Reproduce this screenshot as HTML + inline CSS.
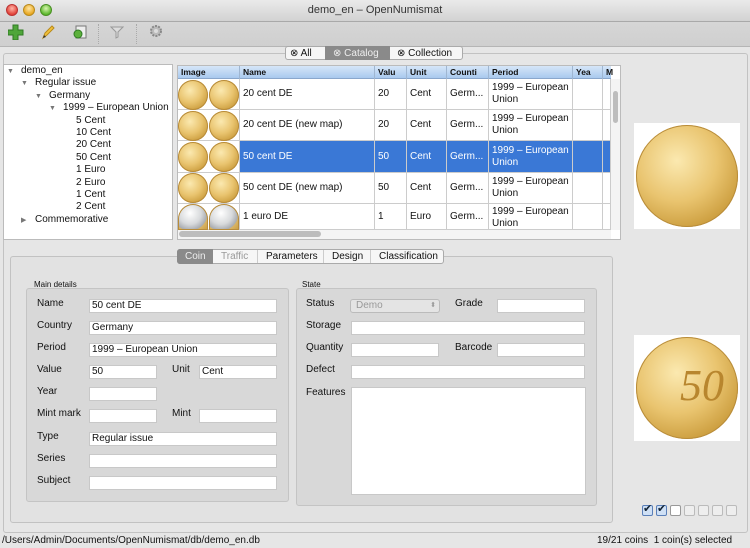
<!DOCTYPE html>
<html><head><meta charset="utf-8"><style>
*{box-sizing:border-box;margin:0;padding:0}
body{width:750px;height:548px;overflow:hidden;background:#e6e6e6;font-family:"Liberation Sans",sans-serif;font-size:10px;color:#111;position:relative}
.a{position:absolute}
.coin{position:absolute;border-radius:50%;background:radial-gradient(circle at 40% 35%,#fbe9b0 0%,#e9c46f 45%,#c99a3a 80%,#a9782a 100%);box-shadow:inset 0 0 0 1px #b88c3a}
.silver{background:radial-gradient(circle at 40% 35%,#ffffff 0%,#d8dadc 45%,#a8abb0 70%,#d8b466 72%,#c99a3a 100%)}
.inp{position:absolute;background:#fff;border:1px solid #c8c8c8;height:14px;font-size:10px;padding-left:2px;line-height:12px}
.lbl{position:absolute;font-size:10px}
.th{position:absolute;top:66px;height:13px;font-weight:bold;font-size:8.5px;line-height:13px;padding-left:3px;border-right:1px solid #9fb6d1}
.cell{position:absolute;font-size:10px;padding-left:3px;display:flex;align-items:center;border-right:1px solid #ccc;border-bottom:1px solid #ccc;line-height:12px}
.sel{background:#3a78d6;color:#fff}
.cb{position:absolute;top:505px;width:11px;height:11px;border:1px solid #bbb;border-radius:2px;background:#eee}
.tr{height:12.4px;line-height:12.4px;white-space:nowrap}
.ar{color:#777;font-size:7px;display:inline-block;width:14px}
</style></head><body>
<div class="a" style="left:0;top:0;width:750px;height:22px;background:linear-gradient(#eaeaea,#d2d2d2);border-bottom:1px solid #a9a9a9"></div>
<div class="a" style="left:6px;top:4px;width:12px;height:12px;border-radius:50%;background:radial-gradient(circle at 50% 35%,#ffb5a8,#e2443a 70%);border:1px solid #b33"></div>
<div class="a" style="left:23px;top:4px;width:12px;height:12px;border-radius:50%;background:radial-gradient(circle at 50% 35%,#ffe7a5,#e8a722 70%);border:1px solid #b98a1d"></div>
<div class="a" style="left:40px;top:4px;width:12px;height:12px;border-radius:50%;background:radial-gradient(circle at 50% 35%,#d9f5b0,#5cb82e 70%);border:1px solid #4a8f24"></div>
<div class="a" style="left:0;top:4px;width:750px;text-align:center;font-size:11px;color:#333">demo_en – OpenNumismat</div>
<div class="a" style="left:0;top:22px;width:750px;height:24px;background:linear-gradient(#d6d6d6,#cfcfcf)"></div>
<div class="a" style="left:0;top:46px;width:750px;height:1px;background:#b5b5b5"></div>
<svg class="a" style="left:8px;top:24px" width="16" height="16"><path d="M5 1h5v5h5v5h-5v5h-5v-5h-5v-5h5z" fill="#4fa63a" stroke="#2f7a22"/></svg>
<svg class="a" style="left:40px;top:24px" width="16" height="16"><path d="M3 14l2-5 7-7 2 2-7 7z" fill="#f2c13c" stroke="#b88a1a"/><path d="M3 14l1-3 2 2z" fill="#333"/></svg>
<svg class="a" style="left:72px;top:24px" width="16" height="16"><rect x="4" y="2" width="10" height="12" fill="#eee" stroke="#777"/><circle cx="6" cy="10" r="4" fill="#5cb03c" stroke="#2e7a22"/></svg>
<div class="a" style="left:98px;top:24px;width:1px;height:20px;border-left:1px dotted #aaa"></div>
<svg class="a" style="left:110px;top:25px" width="14" height="14"><path d="M1 2h12l-5 5v5l-2 1v-6z" fill="#ddd" stroke="#999"/></svg>
<div class="a" style="left:136px;top:24px;width:1px;height:20px;border-left:1px dotted #aaa"></div>
<svg class="a" style="left:149px;top:24px" width="14" height="14"><circle cx="7" cy="7" r="5" fill="#bbb" stroke="#888" stroke-dasharray="2 1.2" stroke-width="2"/><circle cx="7" cy="7" r="2" fill="#ddd"/></svg>
<div class="a" style="left:3px;top:53px;width:745px;height:480px;border:1px solid #c2c2c2;border-radius:3px"></div>
<div class="a" style="left:285px;top:46px;width:178px;height:14px;background:#f6f6f6;border:1px solid #aaa;border-radius:3px"></div>
<div class="a" style="left:325px;top:46px;width:65px;height:14px;background:#8a8a8a"></div>
<div class="a" style="left:290px;top:47px;font-size:10px;line-height:13px">&#x2297; All</div>
<div class="a" style="left:333px;top:47px;font-size:10px;line-height:13px;color:#eee">&#x2297; Catalog</div>
<div class="a" style="left:397px;top:47px;font-size:10px;line-height:13px">&#x2297; Collection</div>
<!-- tree -->
<div class="a" style="left:3px;top:64px;width:170px;height:176px;background:#fff;border:1px solid #bbb"></div>
<div class="a" style="left:7px;top:65px;font-size:10px">
<div class="tr"><span class="ar">▼</span>demo_en</div>
<div class="tr" style="padding-left:14px"><span class="ar">▼</span>Regular issue</div>
<div class="tr" style="padding-left:28px"><span class="ar">▼</span>Germany</div>
<div class="tr" style="padding-left:42px"><span class="ar">▼</span>1999 – European Union</div>
<div class="tr" style="padding-left:69px">5 Cent</div>
<div class="tr" style="padding-left:69px">10 Cent</div>
<div class="tr" style="padding-left:69px">20 Cent</div>
<div class="tr" style="padding-left:69px">50 Cent</div>
<div class="tr" style="padding-left:69px">1 Euro</div>
<div class="tr" style="padding-left:69px">2 Euro</div>
<div class="tr" style="padding-left:69px">1 Cent</div>
<div class="tr" style="padding-left:69px">2 Cent</div>
<div class="tr" style="padding-left:14px"><span class="ar">▶</span>Commemorative</div>
</div>
<!-- table -->
<div class="a" style="left:177px;top:65px;width:444px;height:175px;background:#fff;border:1px solid #bbb"></div>
<div class="a" style="left:178px;top:66px;width:433px;height:13px;background:linear-gradient(#d6e6f8,#a9c9ee);border-bottom:1px solid #8aa7cc"></div>
<div class="th" style="left:178px;width:62px">Image</div>
<div class="th" style="left:240px;width:135px">Name</div>
<div class="th" style="left:375px;width:32px">Valu</div>
<div class="th" style="left:407px;width:40px">Unit</div>
<div class="th" style="left:447px;width:42px">Counti</div>
<div class="th" style="left:489px;width:84px">Period</div>
<div class="th" style="left:573px;width:30px">Yea</div>
<div class="th" style="left:603px;width:8px;border:none">M</div>

<div class="cell" style="left:178px;top:79px;width:62px;height:31px"></div>
<div class="cell" style="left:240px;top:79px;width:135px;height:31px">20 cent DE</div>
<div class="cell" style="left:375px;top:79px;width:32px;height:31px">20</div>
<div class="cell" style="left:407px;top:79px;width:40px;height:31px">Cent</div>
<div class="cell" style="left:447px;top:79px;width:42px;height:31px">Germ...</div>
<div class="cell" style="left:489px;top:79px;width:84px;height:31px">1999 – European Union</div>
<div class="cell" style="left:573px;top:79px;width:30px;height:31px"></div>
<div class="cell" style="left:603px;top:79px;width:8px;height:31px"></div>

<div class="cell" style="left:178px;top:110px;width:62px;height:31px"></div>
<div class="cell" style="left:240px;top:110px;width:135px;height:31px">20 cent DE (new map)</div>
<div class="cell" style="left:375px;top:110px;width:32px;height:31px">20</div>
<div class="cell" style="left:407px;top:110px;width:40px;height:31px">Cent</div>
<div class="cell" style="left:447px;top:110px;width:42px;height:31px">Germ...</div>
<div class="cell" style="left:489px;top:110px;width:84px;height:31px">1999 – European Union</div>
<div class="cell" style="left:573px;top:110px;width:30px;height:31px"></div>
<div class="cell" style="left:603px;top:110px;width:8px;height:31px"></div>

<div class="cell" style="left:178px;top:141px;width:62px;height:32px"></div>
<div class="cell sel" style="left:240px;top:141px;width:135px;height:32px">50 cent DE</div>
<div class="cell sel" style="left:375px;top:141px;width:32px;height:32px">50</div>
<div class="cell sel" style="left:407px;top:141px;width:40px;height:32px">Cent</div>
<div class="cell sel" style="left:447px;top:141px;width:42px;height:32px">Germ...</div>
<div class="cell sel" style="left:489px;top:141px;width:84px;height:32px">1999 – European Union</div>
<div class="cell sel" style="left:573px;top:141px;width:30px;height:32px"></div>
<div class="cell sel" style="left:603px;top:141px;width:8px;height:32px"></div>

<div class="cell" style="left:178px;top:173px;width:62px;height:31px"></div>
<div class="cell" style="left:240px;top:173px;width:135px;height:31px">50 cent DE (new map)</div>
<div class="cell" style="left:375px;top:173px;width:32px;height:31px">50</div>
<div class="cell" style="left:407px;top:173px;width:40px;height:31px">Cent</div>
<div class="cell" style="left:447px;top:173px;width:42px;height:31px">Germ...</div>
<div class="cell" style="left:489px;top:173px;width:84px;height:31px">1999 – European Union</div>
<div class="cell" style="left:573px;top:173px;width:30px;height:31px"></div>
<div class="cell" style="left:603px;top:173px;width:8px;height:31px"></div>

<div class="cell" style="left:178px;top:204px;width:62px;height:26px"></div>
<div class="cell" style="left:240px;top:204px;width:135px;height:26px;align-items:flex-start;padding-top:7px">1 euro DE</div>
<div class="cell" style="left:375px;top:204px;width:32px;height:26px;align-items:flex-start;padding-top:7px">1</div>
<div class="cell" style="left:407px;top:204px;width:40px;height:26px;align-items:flex-start;padding-top:7px">Euro</div>
<div class="cell" style="left:447px;top:204px;width:42px;height:26px;align-items:flex-start;padding-top:7px">Germ...</div>
<div class="cell" style="left:489px;top:204px;width:84px;height:26px;align-items:flex-start;padding-top:2px">1999 – European Union</div>
<div class="cell" style="left:573px;top:204px;width:30px;height:26px"></div>
<div class="cell" style="left:603px;top:204px;width:8px;height:26px"></div>

<div class="coin" style="left:178px;top:80px;width:30px;height:30px"></div>
<div class="coin" style="left:209px;top:80px;width:30px;height:30px"></div>
<div class="coin" style="left:178px;top:111px;width:30px;height:30px"></div>
<div class="coin" style="left:209px;top:111px;width:30px;height:30px"></div>
<div class="coin" style="left:178px;top:142px;width:30px;height:30px"></div>
<div class="coin" style="left:209px;top:142px;width:30px;height:30px"></div>
<div class="coin" style="left:178px;top:173px;width:30px;height:30px"></div>
<div class="coin" style="left:209px;top:173px;width:30px;height:30px"></div>
<div class="coin silver" style="left:178px;top:204px;width:30px;height:26px;border-radius:15px 15px 0 0"></div>
<div class="coin silver" style="left:209px;top:204px;width:30px;height:26px;border-radius:15px 15px 0 0"></div>
<div class="a" style="left:178px;top:230px;width:433px;height:9px;background:#f4f4f4"></div>
<div class="a" style="left:179px;top:231px;width:142px;height:6px;background:#bdbdbd;border-radius:3px"></div>
<div class="a" style="left:611px;top:79px;width:9px;height:151px;background:#f4f4f4"></div>
<div class="a" style="left:613px;top:91px;width:5px;height:32px;background:#bdbdbd;border-radius:3px"></div>
<div class="a" style="left:634px;top:123px;width:106px;height:106px;background:#fff"></div>
<div class="coin" style="left:636px;top:125px;width:102px;height:102px"></div>
<div class="a" style="left:634px;top:335px;width:106px;height:106px;background:#fff"></div>
<div class="coin" style="left:636px;top:337px;width:102px;height:102px"></div>
<div class="a" style="left:680px;top:360px;font-family:'Liberation Serif',serif;font-style:italic;font-size:44px;color:#b8862e">50</div>
<div class="a" style="left:10px;top:256px;width:603px;height:267px;border:1px solid #c2c2c2;border-radius:3px;background:#e2e2e2"></div>
<div class="a" style="left:177px;top:249px;width:267px;height:15px;background:#f6f6f6;border:1px solid #aaa;border-radius:3px"></div>
<div class="a" style="left:177px;top:249px;width:36px;height:15px;background:#8a8a8a;border-radius:3px 0 0 3px"></div>
<div class="a" style="left:185px;top:251px;font-size:10px;line-height:12px;color:#eee">Coin</div>
<div class="a" style="left:221px;top:251px;font-size:10px;line-height:12px;color:#999">Traffic</div>
<div class="a" style="left:257px;top:250px;width:1px;height:13px;background:#ccc"></div>
<div class="a" style="left:266px;top:251px;font-size:10px;line-height:12px">Parameters</div>
<div class="a" style="left:323px;top:250px;width:1px;height:13px;background:#ccc"></div>
<div class="a" style="left:332px;top:251px;font-size:10px;line-height:12px">Design</div>
<div class="a" style="left:370px;top:250px;width:1px;height:13px;background:#ccc"></div>
<div class="a" style="left:379px;top:251px;font-size:10px;line-height:12px">Classification</div>

<div class="a" style="left:34px;top:280px;font-size:8px">Main details</div>
<div class="a" style="left:26px;top:288px;width:263px;height:214px;border:1px solid #c4c4c4;border-radius:3px;background:#d8d8d8"></div>
<div class="a" style="left:302px;top:280px;font-size:8px">State</div>
<div class="a" style="left:296px;top:288px;width:301px;height:218px;border:1px solid #c4c4c4;border-radius:3px;background:#d8d8d8"></div>

<div class="lbl" style="left:37px;top:298px">Name</div><div class="inp" style="left:89px;top:299px;width:188px">50 cent DE</div>
<div class="lbl" style="left:37px;top:320px">Country</div><div class="inp" style="left:89px;top:321px;width:188px">Germany</div>
<div class="lbl" style="left:37px;top:342px">Period</div><div class="inp" style="left:89px;top:343px;width:188px">1999 – European Union</div>
<div class="lbl" style="left:37px;top:364px">Value</div><div class="inp" style="left:89px;top:365px;width:68px">50</div>
<div class="lbl" style="left:172px;top:364px">Unit</div><div class="inp" style="left:199px;top:365px;width:78px">Cent</div>
<div class="lbl" style="left:37px;top:386px">Year</div><div class="inp" style="left:89px;top:387px;width:68px"></div>
<div class="lbl" style="left:37px;top:408px">Mint mark</div><div class="inp" style="left:89px;top:409px;width:68px"></div>
<div class="lbl" style="left:172px;top:408px">Mint</div><div class="inp" style="left:199px;top:409px;width:78px"></div>
<div class="lbl" style="left:37px;top:431px">Type</div><div class="inp" style="left:89px;top:432px;width:188px">Regular issue</div>
<div class="lbl" style="left:37px;top:453px">Series</div><div class="inp" style="left:89px;top:454px;width:188px"></div>
<div class="lbl" style="left:37px;top:475px">Subject</div><div class="inp" style="left:89px;top:476px;width:188px"></div>

<div class="lbl" style="left:306px;top:298px">Status</div>
<div class="inp" style="left:350px;top:299px;width:90px;background:#e4e4e4;border-color:#bbb;border-radius:3px;color:#999;padding-left:5px">Demo<span style="position:absolute;right:3px;top:0;font-size:7px">⬍</span></div>
<div class="lbl" style="left:455px;top:298px">Grade</div><div class="inp" style="left:497px;top:299px;width:88px"></div>
<div class="lbl" style="left:306px;top:320px">Storage</div><div class="inp" style="left:351px;top:321px;width:234px"></div>
<div class="lbl" style="left:306px;top:342px">Quantity</div><div class="inp" style="left:351px;top:343px;width:88px"></div>
<div class="lbl" style="left:455px;top:342px">Barcode</div><div class="inp" style="left:497px;top:343px;width:88px"></div>
<div class="lbl" style="left:306px;top:364px">Defect</div><div class="inp" style="left:351px;top:365px;width:234px"></div>
<div class="lbl" style="left:306px;top:387px">Features</div><div class="inp" style="left:351px;top:387px;width:235px;height:108px"></div>

<div class="cb" style="left:642px;background:#cfe0f5;border-color:#5a7fb8"></div><div class="a" style="left:643px;top:502px;font-size:11px;color:#123">✔</div>
<div class="cb" style="left:656px;background:#cfe0f5;border-color:#5a7fb8"></div><div class="a" style="left:657px;top:502px;font-size:11px;color:#123">✔</div>
<div class="cb" style="left:670px;background:#fff;border-color:#999"></div>
<div class="cb" style="left:684px"></div><div class="cb" style="left:698px"></div><div class="cb" style="left:712px"></div><div class="cb" style="left:726px"></div>
<div class="a" style="left:2px;top:535px;font-size:10px">/Users/Admin/Documents/OpenNumismat/db/demo_en.db</div>
<div class="a" style="left:597px;top:535px;font-size:10px">19/21 coins&nbsp; 1 coin(s) selected</div>
</body></html>
